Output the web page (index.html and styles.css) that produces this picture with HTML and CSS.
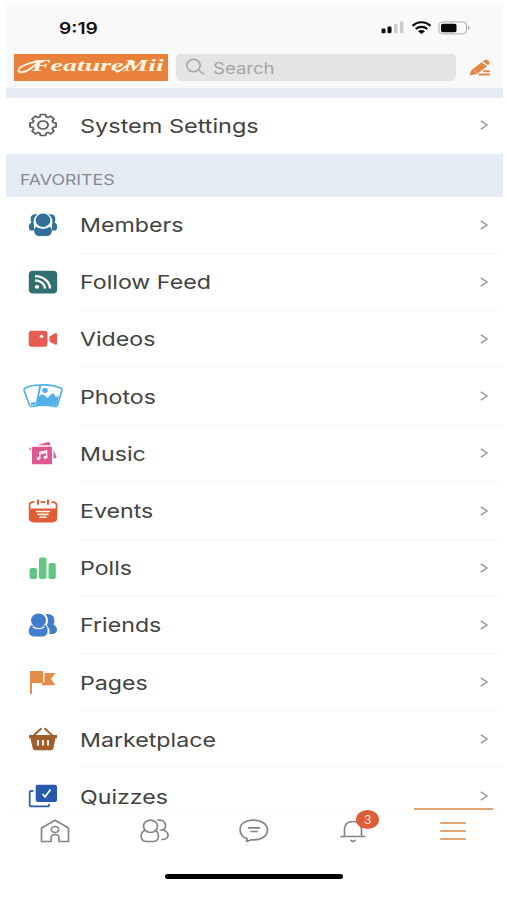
FILE: index.html
```html
<!DOCTYPE html>
<html lang="en">
<head>
<meta charset="utf-8">
<meta name="viewport" content="width=device-width">
<title>FeatureMii</title>
<link rel="stylesheet" href="styles.css">
</head>
<body>
<div class="phone">
  <header class="top">
    <div class="status">
      <span class="time">9:19</span>
      <svg class="status-icons" width="92" height="14" viewBox="0 0 92 14">
        <g fill="#080808"><rect x="2.500" y="7.500" width="4" height="4.800" rx="1.300"/><rect x="8.500" y="5.500" width="4" height="6.800" rx="1.300"/></g>
        <g fill="#cbcbcb"><rect x="15" y="3" width="3.500" height="9.300" rx="1"/><rect x="21" y=".5" width="3.500" height="11.800" rx="1"/></g>
        <g fill="none" stroke="#080808" stroke-width="2.200"><path d="M33.500 4.900C38.500 0 46.500 0 51.500 4.900"/><path d="M36.700 8C40 5.100 45 5.100 48.300 8"/></g>
        <path d="M39 10.200C41 8.600 44 8.600 46 10.200L42.500 13Z" fill="#080808"/>
        <rect x="60" y=".9" width="27.500" height="12" rx="3.500" fill="none" stroke="#aaa"/>
        <rect x="62" y="2.700" width="15.500" height="8.600" rx="1.800" fill="#080808"/>
        <path d="M89.100 4.600q3 2.200 0 4.400Z" fill="#999"/>
      </svg>
    </div>
    <div class="tools">
      <div class="logo">
        <svg class="swash" viewBox="0 0 154 27"><path d="M30 7.500C20 7 12 10 7 13C2 17 5 19.500 11 17.500C17 15.500 20 11.500 25 8" fill="none" stroke="#fff3df" stroke-width="1.900"/><path d="M121 8C115 9 111 13 107 16C104 18 101 18 102 15.500" fill="none" stroke="#fff3df" stroke-width="1.900"/></svg>
        <span class="logo-text">FeatureMii</span>
      </div>
      <div class="search">
        <svg width="20" height="18" viewBox="0 0 20 18"><g fill="none" stroke="#a2a2a2" stroke-width="1.500"><ellipse cx="7.500" cy="7.500" rx="6.700" ry="6.200"/><path d="M12.500 12L18 16.500"/></g></svg>
        <span class="search-text">Search</span>
      </div>
      <svg class="compose" width="22" height="18" viewBox="0 0 22 18"><g fill="#df8848"><path d="M.5 16.500L2.500 11L12.500 3.300L18.200 7.200L8 15Z"/><path d="M13.700 2.400L15.500 1Q17 0 18.500 1L20.200 2.400Q21.300 3.600 20 4.900L19.300 6.300Z"/><rect x="14" y="11.300" width="7" height="1.900" rx=".9"/><rect x="9.500" y="14.600" width="11.500" height="2" rx=".9"/></g><path d="M4.500 11.500L8 14" stroke="#f4c39c" stroke-width=".8"/></svg>
    </div>
  </header>
  <div class="band"></div>
  <main class="menu">
    <a class="row system"><span class="icon"><svg width="30" height="26" viewBox="-15 -13 30 26"><g transform="scale(1.240 1)" fill="none" stroke="#5c5c5c" stroke-width="1.500" stroke-linejoin="round"><path d="M-2.500-8.100L-2-10.500H2L2.500-8.100L3.960-7.490L6.080-8.910L8.910-6.080L7.490-3.960L8.100-2.500L10.500-2V2L8.100 2.500L7.490 3.960L8.910 6.080L6.080 8.910L3.960 7.490L2.500 8.100L2 10.500H-2L-2.500 8.100L-3.960 7.490L-6.080 8.910L-8.910 6.080L-7.490 3.960L-8.100 2.500L-10.500 2V-2L-8.100-2.500L-7.490-3.960L-8.910-6.080L-6.080-8.910L-3.960-7.490Z"/><circle r="4.100"/></g></svg></span><span class="label">System Settings</span><svg class="chev" viewBox="0 0 8 10"><path d="M.8.8L7 5L.8 9.200"/></svg></a>
    <h2 class="section"><span>FAVORITES</span></h2>

    <a class="row"><span class="icon"><svg width="30" height="24" viewBox="0 0 30 24"><g fill="#32709b"><path d="M9.500 1.500C3 0 1.500 5 3.500 9.500C.2 10 .2 17 2.500 17.500H6V12C5 9 5.500 4 9.500 1.500ZM20.500 1.500C27 0 28.500 5 26.500 9.500C29.800 10 29.800 17 27.500 17.500H24V12C25 9 24.500 4 20.500 1.500Z"/><ellipse cx="15" cy="7.300" rx="7.300" ry="6.800"/><path d="M8 13.800C12 16.300 18 16.300 22 13.800Q24.500 15.500 23.600 19.500Q22.500 23 19 23H11Q7.500 23 6.400 19.500Q5.500 15.500 8 13.800Z"/></g><path d="M8.500 12.800Q15 17.500 21.500 12.800" fill="none" stroke="#dcecf8" stroke-width="1"/></svg></span><span class="label">Members</span><svg class="chev" viewBox="0 0 8 10"><path d="M.8.8L7 5L.8 9.200"/></svg></a>

    <a class="row"><span class="icon"><svg width="30" height="24" viewBox="0 0 30 24"><rect x=".8" y=".8" width="28.400" height="22.600" rx="4" fill="#316f70"/><g fill="none" stroke="#fff" stroke-width="2.300"><path d="M7 6.200C15 6.200 22 11.500 22 18.600"/><path d="M7 10.400C12 10.400 16.900 13.500 16.900 18.600"/></g><ellipse cx="9" cy="16.800" rx="2.200" ry="1.900" fill="#fff"/></svg></span><span class="label">Follow Feed</span><svg class="chev" viewBox="0 0 8 10"><path d="M.8.8L7 5L.8 9.200"/></svg></a>

    <a class="row"><span class="icon"><svg width="30" height="24" viewBox="0 0 30 24"><g fill="#e65c51"><rect x=".7" y="3.800" width="18.800" height="16" rx="3"/><path d="M21.500 9.500L27 6.200Q29 5.300 29 7V16.500Q29 18.300 27 17.500L21.500 14.500Z"/></g><ellipse cx="13.500" cy="9.300" rx="1.800" ry="1.600" fill="#fff"/></svg></span><span class="label">Videos</span><svg class="chev" viewBox="0 0 8 10"><path d="M.8.8L7 5L.8 9.200"/></svg></a>

    <a class="row"><span class="icon"><svg width="40" height="24" viewBox="0 0 40 24"><g fill="#fff" stroke="#50b0e7" stroke-width="1.700" stroke-linejoin="round"><path d="M17 1Q8 1 2.300 4Q.7 5 1.200 6.700L6.500 21Q7.300 23 9.500 22.500L15 21.500Z"/><path d="M17.500 1Q28 0 37.700 4Q39.300 5 38.800 6.700L34.500 21Q33.800 23 31.500 22.500Q23 20.500 14.500 21.500Q13 21.500 13.500 20Z"/></g><path d="M14.800 13.500Q19 9 21.500 11.500L24.500 14L29 9.500Q30 8.800 31 10L33 13L36 11.800L33.300 22Q23 20 14 21.500Z" fill="#50b0e7"/><ellipse cx="22" cy="6.500" rx="2.800" ry="2.400" fill="#50b0e7"/><path d="M7.500 19L12.500 17.800V20.500L8.300 21.300Z" fill="#50b0e7"/></svg></span><span class="label">Photos</span><svg class="chev" viewBox="0 0 8 10"><path d="M.8.8L7 5L.8 9.200"/></svg></a>

    <a class="row"><span class="icon"><svg width="30" height="26" viewBox="0 0 30 26"><g fill="#df5792"><rect x="4" y="6.800" width="20" height="17.500" rx=".8"/><path d="M9 5.300L20 2Q21 1.700 21.500 2.500L22.500 5.300ZM25.500 10V18.500L28.700 17.500ZM2.700 11L1 8L2.700 7.500Z"/></g><path d="M11.800 18.300V12.300L18.700 10.800V17.200M11.800 13.800L18.700 12.400" fill="none" stroke="#fff" stroke-width="1.300"/><g fill="#fff"><ellipse cx="10.500" cy="18.500" rx="1.900" ry="1.500"/><ellipse cx="17.400" cy="17.300" rx="1.900" ry="1.500"/></g></svg></span><span class="label">Music</span><svg class="chev" viewBox="0 0 8 10"><path d="M.8.8L7 5L.8 9.200"/></svg></a>

    <a class="row"><span class="icon"><svg width="30" height="24" viewBox="0 0 30 24"><path d="M.8 9.500H29.200V19Q29.200 23.400 24 23.400H6Q.8 23.400.8 19Z" fill="#df5c37"/><path d="M1.500 10V6.500Q1.500 3.300 5 3.100H6.500M12.500 3.100H17.500M23.500 3.100H25Q28.500 3.300 28.500 6.500V10" fill="none" stroke="#df5c37" stroke-width="1.700"/><g stroke="#df5c37" stroke-width="2" stroke-linecap="round"><path d="M10 1.300V5M20 1.300V5"/></g><g stroke="#fff4e6" stroke-width="1.600" stroke-linecap="round"><path d="M8.500 12.500H21.500M10 15.400H20M12 18.300H18"/></g></svg></span><span class="label">Events</span><svg class="chev" viewBox="0 0 8 10"><path d="M.8.8L7 5L.8 9.200"/></svg></a>

    <a class="row"><span class="icon"><svg width="30" height="24" viewBox="0 0 30 24"><g fill="#62c780"><rect x="1.500" y="12" width="7.500" height="11" rx="2"/><rect x="11" y="1.500" width="7.500" height="21.500" rx="2"/><rect x="20.500" y="7" width="7.300" height="16" rx="2"/></g></svg></span><span class="label">Polls</span><svg class="chev" viewBox="0 0 8 10"><path d="M.8.8L7 5L.8 9.200"/></svg></a>

    <a class="row"><span class="icon"><svg width="30" height="24" viewBox="0 0 30 24"><g fill="#407dcd"><ellipse cx="10.500" cy="7.500" rx="7.500" ry="7"/><path d="M3.500 12Q10.500 17 17.500 12Q20.500 15.500 19.300 20Q18 23.400 14.500 23.400H6Q2 23.400 1 20Q0 15.500 3.500 12Z"/><path d="M17.500 1Q24.500.5 26 5Q27 9 25.500 11.500Q30 14 28.700 18.500Q27.500 21.500 21.500 21Q22 15.500 19 12.500Q21.500 6 17.500 1Z"/></g><path d="M4.500 14Q10.500 17.500 16.500 14" fill="none" stroke="#e6f0fc" stroke-width="1.200"/></svg></span><span class="label">Friends</span><svg class="chev" viewBox="0 0 8 10"><path d="M.8.8L7 5L.8 9.200"/></svg></a>

    <a class="row"><span class="icon"><svg width="30" height="24" viewBox="0 0 30 24"><path d="M2 1H15V13H4V24H2Z" fill="#e78c48"/><path d="M16.500 3H27.500L23 9L27.500 15.300H14V12.500H16.500Z" fill="#e78c48"/></svg></span><span class="label">Pages</span><svg class="chev" viewBox="0 0 8 10"><path d="M.8.8L7 5L.8 9.200"/></svg></a>

    <a class="row"><span class="icon"><svg width="30" height="24" viewBox="0 0 30 24"><path d="M1 8H29V11.300H27.500L25.300 21.500Q25 23.300 23 23.300H7Q5 23.300 4.700 21.500L2.500 11.300H1Z" fill="#a0602e"/><path d="M5 9L13 1.700M25 9L17 1.700" stroke="#a0602e" stroke-width="1.900" stroke-linecap="round"/><path d="M10 13V18.500M15 13V18.500M20 13V18.500" stroke="#fff" stroke-width="1.800"/></svg></span><span class="label">Marketplace</span><svg class="chev" viewBox="0 0 8 10"><path d="M.8.8L7 5L.8 9.200"/></svg></a>

    <a class="row"><span class="icon"><svg width="30" height="24" viewBox="0 0 30 24"><rect x="7.700" y=".7" width="21.300" height="17.300" rx="2" fill="#2859ad"/><path d="M5.500 6.800H3.500Q1.700 6.800 1.700 8.500V20.700Q1.700 22.400 3.500 22.400H19.500Q21.200 22.400 21.200 20.700V20" fill="none" stroke="#2859ad" stroke-width="1.700"/><path d="M14.500 10L17 12.800L22.500 5.500" fill="none" stroke="#fff" stroke-width="1.700"/></svg></span><span class="label">Quizzes</span><svg class="chev" viewBox="0 0 8 10"><path d="M.8.8L7 5L.8 9.200"/></svg></a>
  </main>
  <nav class="tabs">
    <a class="tab"><svg width="30" height="24" viewBox="0 0 30 24"><g fill="none" stroke="#858585" stroke-width="1.700" stroke-linejoin="round"><path d="M1.500 22.500V9L15 1.200L28.500 9V22.500H19V18.500Q18.800 15.500 15 15.500Q11.200 15.500 11 18.500V22.500Z"/><ellipse cx="15" cy="10.500" rx="3.700" ry="3"/></g></svg></a>
    <a class="tab"><svg width="30" height="24" viewBox="0 0 30 24"><g fill="none" stroke="#858585" stroke-width="1.700" stroke-linecap="round"><ellipse cx="10.500" cy="7.300" rx="7" ry="6.200"/><path d="M4.500 11.500C.5 13.500.5 18 2.200 20.500Q3.500 22.500 6 22.500H13Q17 22.500 18 19.500C19 16 18.500 13.500 16 11.500M18 1.200Q25 .5 25.500 6.500Q25.800 9.500 23 11Q28.500 13 28 16.500Q27.500 20.500 22 20.500M20.500 11H23"/></g></svg></a>
    <a class="tab"><svg width="30" height="24" viewBox="0 0 30 24"><g fill="none" stroke="#858585" stroke-width="1.700" stroke-linejoin="round" stroke-linecap="round"><path d="M7.500 22.300L8 19.500C-1.500 16 -.8 5 7.500 2.300C17-1 28.500 3 28.500 11C28.500 18.500 20 21.500 12.500 20.800Q10 22 7.500 22.300Z"/><path d="M9.500 8.800H20.500M12 12.500H18"/></g></svg></a>
    <a class="tab"><svg width="30" height="24" viewBox="0 0 30 24"><g fill="none" stroke="#858585" stroke-width="1.700" stroke-linecap="round"><path d="M3 17.500H27M6.500 17V10Q6.800 2.500 15 2.500Q23.200 2.500 23.500 10V17M13 21.300Q15 23.300 17 21.300"/></g></svg><span class="badge">3</span></a>
    <a class="tab active"><span class="burger"><i></i><i></i><i></i></span></a>
  </nav>
  <footer class="home"><span class="home-bar"></span></footer>
</div>
</body>
</html>
```

FILE: styles.css
```css
* { box-sizing: border-box; }
body {
  margin: 0;
  background: #fff;
  font-family: Inter, "Liberation Sans", sans-serif;
  color: #424242;
}
.phone {
  width: 497px;
  height: 900px;
  margin-left: 6px;
  padding-top: 4px;
  display: flex;
  flex-direction: column;
  overflow: hidden;
}
.top { height: 84px; flex: none; background: #f9f9f9; }
.status {
  height: 47px;
  padding: 0 32px 0 53px;
  display: flex;
  align-items: center;
  justify-content: space-between;
}
.time {
  font-size: 16px;
  font-weight: 600;
  color: #111;
  transform: scaleX(1.2);
  transform-origin: left center;
}
.tools { display: flex; align-items: center; padding-left: 8px; height: 32px; }
.logo {
  width: 154px;
  height: 27px;
  background: #e9813b;
  position: relative;
  overflow: hidden;
  flex: none;
}
.swash { position: absolute; inset: 0; }
.logo-text {
  display: block;
  padding-left: 18px;
  font: italic bold 17px/24px "Liberation Serif", serif;
  color: #fff3df;
  transform: scaleX(1.64);
  transform-origin: 18px center;
  white-space: nowrap;
}
.search {
  width: 280px;
  height: 27px;
  margin-left: 8px;
  padding-left: 10px;
  border-radius: 5px;
  background: #e4e4e4;
  display: flex;
  align-items: center;
  gap: 7px;
  flex: none;
}
.search-text {
  font-size: 16px;
  line-height: 20px;
  padding-top: 1px;
  color: #a5a5a5;
  transform: scaleX(1.16);
  transform-origin: left center;
}
.compose { margin: 1px 0 0 13px; }
.band { height: 9.5px; flex: none; background: #e5eaf5; }
.menu { height: 710px; flex: none; overflow: hidden; }
.row {
  height: 57.2px;
  display: grid;
  grid-template-columns: 74px 1fr auto;
  align-items: center;
  padding: 0 15px 1px 0;
  background: linear-gradient(#f8f8f8, #f8f8f8) 74px 100% / 100% 1px no-repeat;
}
.system { height: 56.500px; background: none; }
.icon { display: flex; justify-content: center; padding-right: 1px; }
.label {
  font-size: 19px;
  line-height: 24px;
  padding-top: 3px;
  white-space: nowrap;
  transform: scaleX(1.22);
  transform-origin: left center;
}
.system .label { transform: scaleX(1.235); }
.chev {
  width: 8px;
  height: 10px;
  fill: none;
  stroke: #999;
  stroke-width: 1.5;
}
.section {
  height: 42.500px;
  margin: 0;
  padding: 9px 0 0 14px;
  background: #e5ecf6;
  font-size: 14.500px;
  font-weight: 400;
  line-height: 33px;
  color: #858994;
}
.section span {
  display: inline-block;
  transform: scaleX(1.22);
  transform-origin: left center;
}
.tabs {
  height: 48px;
  flex: none;
  display: grid;
  grid-template-columns: repeat(5, 1fr);
  background: #fff;
  border-top: 1px solid #fafafa;
}
.tab {
  position: relative;
  display: flex;
  align-items: center;
  justify-content: center;
  padding: 0 1px 2px 0;
}
.badge {
  position: absolute;
  left: 52px;
  top: 1px;
  width: 23px;
  height: 19px;
  border-radius: 50%;
  background: #dc5d38;
  color: #ffe8dc;
  font-size: 12px;
  line-height: 19px;
  text-align: center;
}
.active::before {
  content: "";
  position: absolute;
  left: 10px;
  right: 10px;
  top: -1px;
  height: 2px;
  background: #dfa271;
}
.burger { display: grid; gap: 5.500px; width: 26px; }
.burger i { height: 2.200px; border-radius: 1px; background: #dfa271; }
.home { flex: 1; display: flex; justify-content: center; padding: 18px 1px 0 0; }
.home-bar { width: 178px; height: 5px; border-radius: 3px; background: #000; }
```
